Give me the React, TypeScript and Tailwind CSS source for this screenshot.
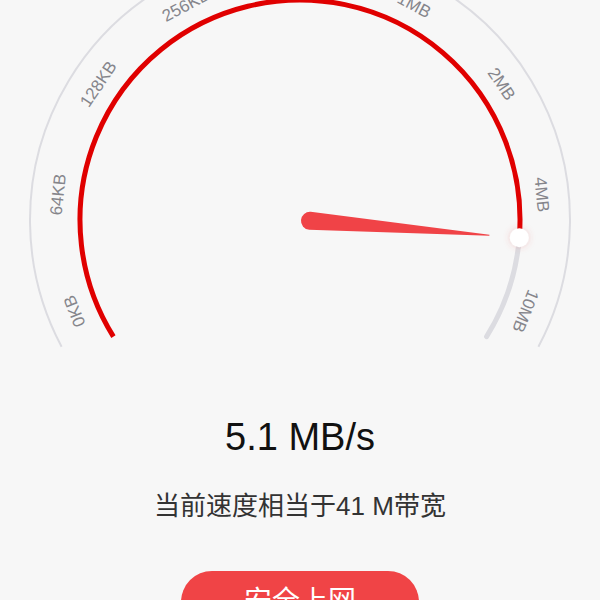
import React from 'react';

const CX = 300;
const CY = 220;

// angle in degrees, measured clockwise from straight up
function polar(r: number, deg: number) {
  const a = (deg * Math.PI) / 180;
  return { x: CX + r * Math.sin(a), y: CY - r * Math.cos(a) };
}

function arcPath(r: number, from: number, to: number) {
  const s = polar(r, from);
  const e = polar(r, to);
  const large = to - from > 180 ? 1 : 0;
  return `M ${s.x} ${s.y} A ${r} ${r} 0 ${large} 1 ${e.x} ${e.y}`;
}

const labels = [
  { text: '0KB', deg: -112 },
  { text: '64KB', deg: -84 },
  { text: '128KB', deg: -56 },
  { text: '256KB', deg: -28 },
  { text: '512KB', deg: 0 },
  { text: '1MB', deg: 28 },
  { text: '2MB', deg: 56 },
  { text: '4MB', deg: 84 },
  { text: '10MB', deg: 112 },
];

const VALUE_DEG = 94.6;

function Gauge() {
  const knob = polar(220, VALUE_DEG);
  return (
    <svg width="600" height="360" viewBox="0 0 600 360" className="block shrink-0">
      <defs>
        <filter id="knobShadow" x="-1" y="-1" width="3" height="3">
          <feDropShadow dx="0" dy="0" stdDeviation="3" floodColor="#e05050" floodOpacity="0.25" />
        </filter>
      </defs>

      {/* outer thin ring */}
      <path d={arcPath(270, -118, 118)} fill="none" stroke="#dcdce1" strokeWidth="2" />

      {/* scale labels */}
      {labels.map((l) => {
        const p = polar(243, l.deg);
        return (
          <text
            key={l.text}
            x={p.x}
            y={p.y}
            textAnchor="middle"
            dominantBaseline="central"
            transform={`rotate(${l.deg} ${p.x} ${p.y})`}
            fill="#85858b"
            fontSize="17"
            fontFamily="'Liberation Sans', Arial, sans-serif"
          >
            {l.text}
          </text>
        );
      })}

      {/* track */}
      <path d={arcPath(220, VALUE_DEG, 122)} fill="none" stroke="#dcdce1" strokeWidth="5" strokeLinecap="round" />
      <path d={arcPath(220, -122, VALUE_DEG)} fill="none" stroke="#e00000" strokeWidth="5" />

      {/* needle */}
      <g transform={`rotate(${VALUE_DEG - 90} ${CX} ${CY})`}>
        <path
          d={`M ${CX + 10} ${CY - 9} L ${CX + 190} ${CY - 0.6} L ${CX + 190} ${CY + 0.6} L ${CX + 10} ${CY + 9} A 9 9 0 0 1 ${CX + 10} ${CY - 9} Z`}
          fill="#f04347"
        />
      </g>

      {/* knob */}
      <circle cx={knob.x} cy={knob.y} r="9.5" fill="#ffffff" filter="url(#knobShadow)" />
    </svg>
  );
}

export default function App() {
  return (
    <div className="w-[600px] h-[600px] overflow-hidden bg-[#f7f7f7] flex flex-col items-center font-['Liberation_Sans','Noto_Sans_CJK_SC',sans-serif]">
      <Gauge />

      <div className="shrink-0 mt-[58px] text-[38px] leading-none text-[#111111]">5.1 MB/s</div>

      <div className="shrink-0 mt-[37px] text-[26px] leading-none text-[#333333]">当前速度相当于41 M带宽</div>

      <button className="shrink-0 mt-[52px] w-[238px] h-[62px] rounded-full bg-[#f04446] text-white text-[28px] leading-none flex items-center justify-center">
        安全上网
      </button>
    </div>
  );
}
